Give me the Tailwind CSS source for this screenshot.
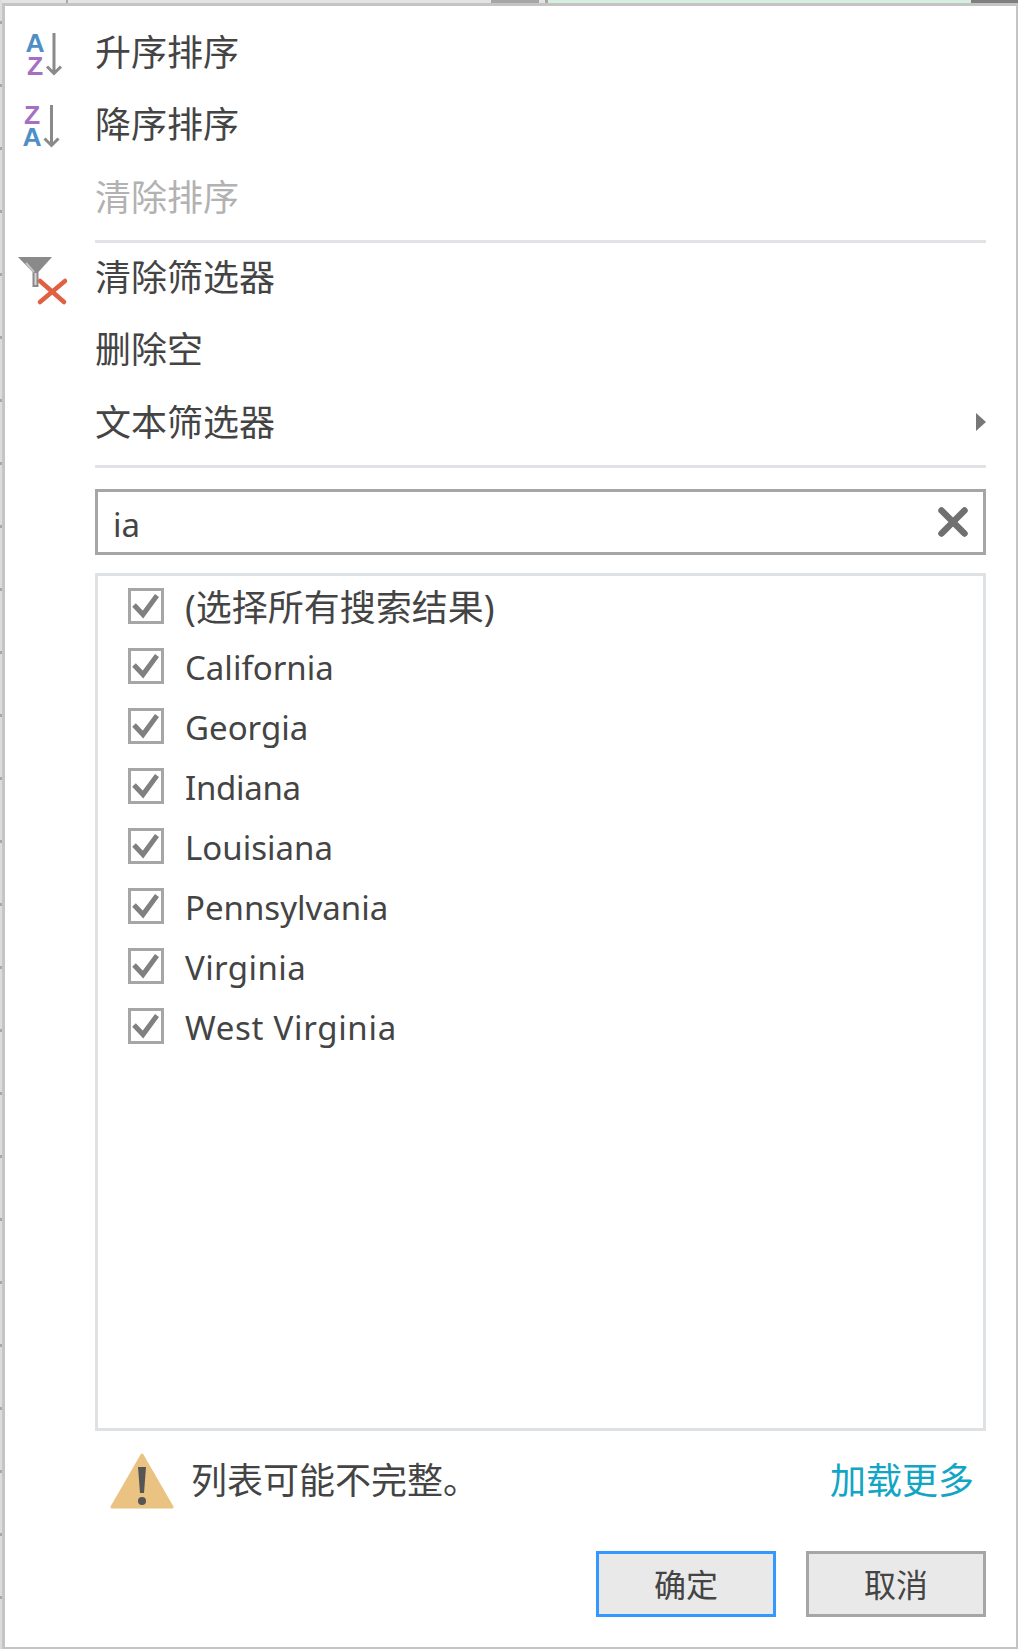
<!DOCTYPE html>
<html lang="zh-CN">
<head>
<meta charset="utf-8">
<script src="https://cdn.jsdelivr.net/npm/@tailwindcss/browser@4"></script>
<title>筛选器</title>
</head>
<body class="bg-white">
<div class="flex h-[1649px] w-[1018px] overflow-hidden font-['Noto_Sans','Noto_Sans_CJK_SC',sans-serif] text-[#444444]">
  <div class="h-full w-[2px] shrink-0 bg-[repeating-linear-gradient(180deg,#dcdcdc_0,#dcdcdc_21px,#a8a8a8_21px,#a8a8a8_24px,#dcdcdc_24px,#dcdcdc_63px)]"></div>
  <div class="flex h-full flex-1 flex-col">
    <div class="flex h-[3px] shrink-0 bg-[#e3e3e3]">
      <div class="ml-[64px] h-full w-[2px] bg-[#a8a8a8]"></div>
      <div class="ml-[423px] h-full w-[48px] bg-[#a6a6a6]"></div>
      <div class="ml-[6px] h-full w-[3px] bg-[#a6a6a6]"></div>
      <div class="h-full w-[423px] bg-[#d5eee0]"></div>
      <div class="h-full flex-1 bg-[#7f7f7f]"></div>
    </div>
    <div class="flex flex-1 flex-col border-[3px] border-r-2 border-b-2 border-[#c4c4c4] bg-white pt-[11px] pr-[30px]">
      <div class="flex h-[72px] items-center text-[36px]">
        <svg class="ml-[15px] w-[60px] h-[60px] shrink-0 mr-[15px]" viewBox="0 0 60 60" fill="none">
          <text x="5.5" y="29" font-family="Liberation Sans" font-weight="700" font-size="26.5" fill="#4f8fc6">A</text>
          <text x="7" y="52" font-family="Liberation Sans" font-weight="700" font-size="26.5" fill="#a56fc4">Z</text>
          <path d="M34 10V50M27 43.5L34 50.5L41 43.5" stroke="#8a8a8a" stroke-width="3"/>
        </svg>
        <span>升序排序</span>
      </div>
      <div class="flex h-[72px] items-center text-[36px]">
        <svg class="ml-[15px] w-[60px] h-[60px] shrink-0 mr-[15px]" viewBox="0 0 60 60" fill="none">
          <text x="4" y="29" font-family="Liberation Sans" font-weight="700" font-size="26.5" fill="#a56fc4">Z</text>
          <text x="2.5" y="51" font-family="Liberation Sans" font-weight="700" font-size="26.5" fill="#4f8fc6">A</text>
          <path d="M31.5 10V50M24.5 43.5L31.5 50.5L38.5 43.5" stroke="#8a8a8a" stroke-width="3"/>
        </svg>
        <span>降序排序</span>
      </div>
      <div class="flex h-[72px] items-center pl-[90px] pt-[1px] text-[36px] text-[#b2b2b2]">清除排序</div>
      <div class="ml-[90px] mt-[7px] h-[3px] bg-[#e2e3e6]"></div>
      <div class="flex h-[72px] items-center text-[36px] -mt-px">
        <svg class="ml-[10px] w-[60px] h-[60px] shrink-0 mr-[20px]" viewBox="0 0 60 60" fill="none">
          <path d="M3 9H37L23.5 24V39H17.5V24Z" fill="#8a8a8a"/>
          <path d="M19.5 25H21.5V37H19.5Z" fill="#d8d8d8"/>
          <path d="M11 15L19 24" stroke="#c4c4c4" stroke-width="2"/>
          <path d="M25 33L49 54M50 33L25 54" stroke="#df6142" stroke-width="4.5" stroke-linecap="round"/>
        </svg>
        <span>清除筛选器</span>
      </div>
      <div class="flex h-[72px] items-center pl-[90px] text-[36px]">删除空</div>
      <div class="flex h-[72px] items-center justify-between pl-[90px] text-[36px]">
        <span class="pt-[2px]">文本筛选器</span>
        <svg class="w-[10px] h-[18px]" viewBox="0 0 10 18"><path d="M0 0L10 9L0 18Z" fill="#777777"/></svg>
      </div>
      <div class="ml-[90px] mt-[7px] h-[3px] bg-[#e2e3e6]"></div>
      <div class="ml-[90px] mt-[21px] flex h-[66px] items-center justify-between border-[3px] border-[#a6a6a6] pl-[15px] pr-[15px] text-[33px]">
        <span class="pt-[6px]">ia</span>
        <svg class="w-[30px] h-[30px]" viewBox="0 0 30 30"><path d="M3.5 3.5L26.5 26.5M26.5 3.5L3.5 26.5" stroke="#707070" stroke-width="6.5" stroke-linecap="round"/></svg>
      </div>
      <div class="ml-[90px] mt-[18px] h-[858px] border-[3px] border-[#dfe2e5] pl-[30px] text-[33px]">
        <div class="flex h-[60px] items-center gap-[21px]">
          <svg class="w-[36px] h-[36px] shrink-0" viewBox="0 0 36 36" fill="none"><rect x="1.5" y="1.5" width="33" height="33" stroke="#a6a6a6" stroke-width="3"/><path d="M6 17L15 26.5L29 7.5" stroke="#808080" stroke-width="5"/></svg>
          <span class="pt-[4px] text-[36px]">(选择所有搜索结果)</span>
        </div>
        <div class="flex h-[60px] items-center gap-[21px]">
          <svg class="w-[36px] h-[36px] shrink-0" viewBox="0 0 36 36" fill="none"><rect x="1.5" y="1.5" width="33" height="33" stroke="#a6a6a6" stroke-width="3"/><path d="M6 17L15 26.5L29 7.5" stroke="#808080" stroke-width="5"/></svg>
          <span class="pt-[4px]">California</span>
        </div>
        <div class="flex h-[60px] items-center gap-[21px]">
          <svg class="w-[36px] h-[36px] shrink-0" viewBox="0 0 36 36" fill="none"><rect x="1.5" y="1.5" width="33" height="33" stroke="#a6a6a6" stroke-width="3"/><path d="M6 17L15 26.5L29 7.5" stroke="#808080" stroke-width="5"/></svg>
          <span class="pt-[4px]">Georgia</span>
        </div>
        <div class="flex h-[60px] items-center gap-[21px]">
          <svg class="w-[36px] h-[36px] shrink-0" viewBox="0 0 36 36" fill="none"><rect x="1.5" y="1.5" width="33" height="33" stroke="#a6a6a6" stroke-width="3"/><path d="M6 17L15 26.5L29 7.5" stroke="#808080" stroke-width="5"/></svg>
          <span class="pt-[4px] tracking-[-0.3px]">Indiana</span>
        </div>
        <div class="flex h-[60px] items-center gap-[21px]">
          <svg class="w-[36px] h-[36px] shrink-0" viewBox="0 0 36 36" fill="none"><rect x="1.5" y="1.5" width="33" height="33" stroke="#a6a6a6" stroke-width="3"/><path d="M6 17L15 26.5L29 7.5" stroke="#808080" stroke-width="5"/></svg>
          <span class="pt-[4px]">Louisiana</span>
        </div>
        <div class="flex h-[60px] items-center gap-[21px]">
          <svg class="w-[36px] h-[36px] shrink-0" viewBox="0 0 36 36" fill="none"><rect x="1.5" y="1.5" width="33" height="33" stroke="#a6a6a6" stroke-width="3"/><path d="M6 17L15 26.5L29 7.5" stroke="#808080" stroke-width="5"/></svg>
          <span class="pt-[4px]">Pennsylvania</span>
        </div>
        <div class="flex h-[60px] items-center gap-[21px]">
          <svg class="w-[36px] h-[36px] shrink-0" viewBox="0 0 36 36" fill="none"><rect x="1.5" y="1.5" width="33" height="33" stroke="#a6a6a6" stroke-width="3"/><path d="M6 17L15 26.5L29 7.5" stroke="#808080" stroke-width="5"/></svg>
          <span class="pt-[4px] tracking-[0.4px]">Virginia</span>
        </div>
        <div class="flex h-[60px] items-center gap-[21px]">
          <svg class="w-[36px] h-[36px] shrink-0" viewBox="0 0 36 36" fill="none"><rect x="1.5" y="1.5" width="33" height="33" stroke="#a6a6a6" stroke-width="3"/><path d="M6 17L15 26.5L29 7.5" stroke="#808080" stroke-width="5"/></svg>
          <span class="pt-[4px] tracking-[0.7px]">West Virginia</span>
        </div>
      </div>
      <div class="ml-[105px] mt-[20px] flex h-[60px] items-center pr-[12px] text-[36px]">
        <svg class="w-[64px] h-[56px] shrink-0" viewBox="0 0 64 56">
          <path d="M32 2L62 54H2Z" fill="#eac282" stroke="#eac282" stroke-width="3" stroke-linejoin="round"/>
          <path d="M28 14H36L34 40H30Z" fill="#555555"/>
          <circle cx="32" cy="48" r="4" fill="#555555"/>
        </svg>
        <span class="ml-[17px]">列表可能不完整。</span>
        <span class="ml-auto text-[#12a5c4]">加载更多</span>
      </div>
      <div class="mt-[40px] flex justify-end gap-[30px] text-[32px]">
        <div class="flex h-[66px] w-[180px] items-center justify-center border-[3px] border-[#3399ff] bg-[#e9e9e9] pt-[2px]">确定</div>
        <div class="flex h-[66px] w-[180px] items-center justify-center border-[3px] border-[#a6a6a6] bg-[#e9e9e9] pt-[2px]">取消</div>
      </div>
    </div>
  </div>
</div>
</body>
</html>
